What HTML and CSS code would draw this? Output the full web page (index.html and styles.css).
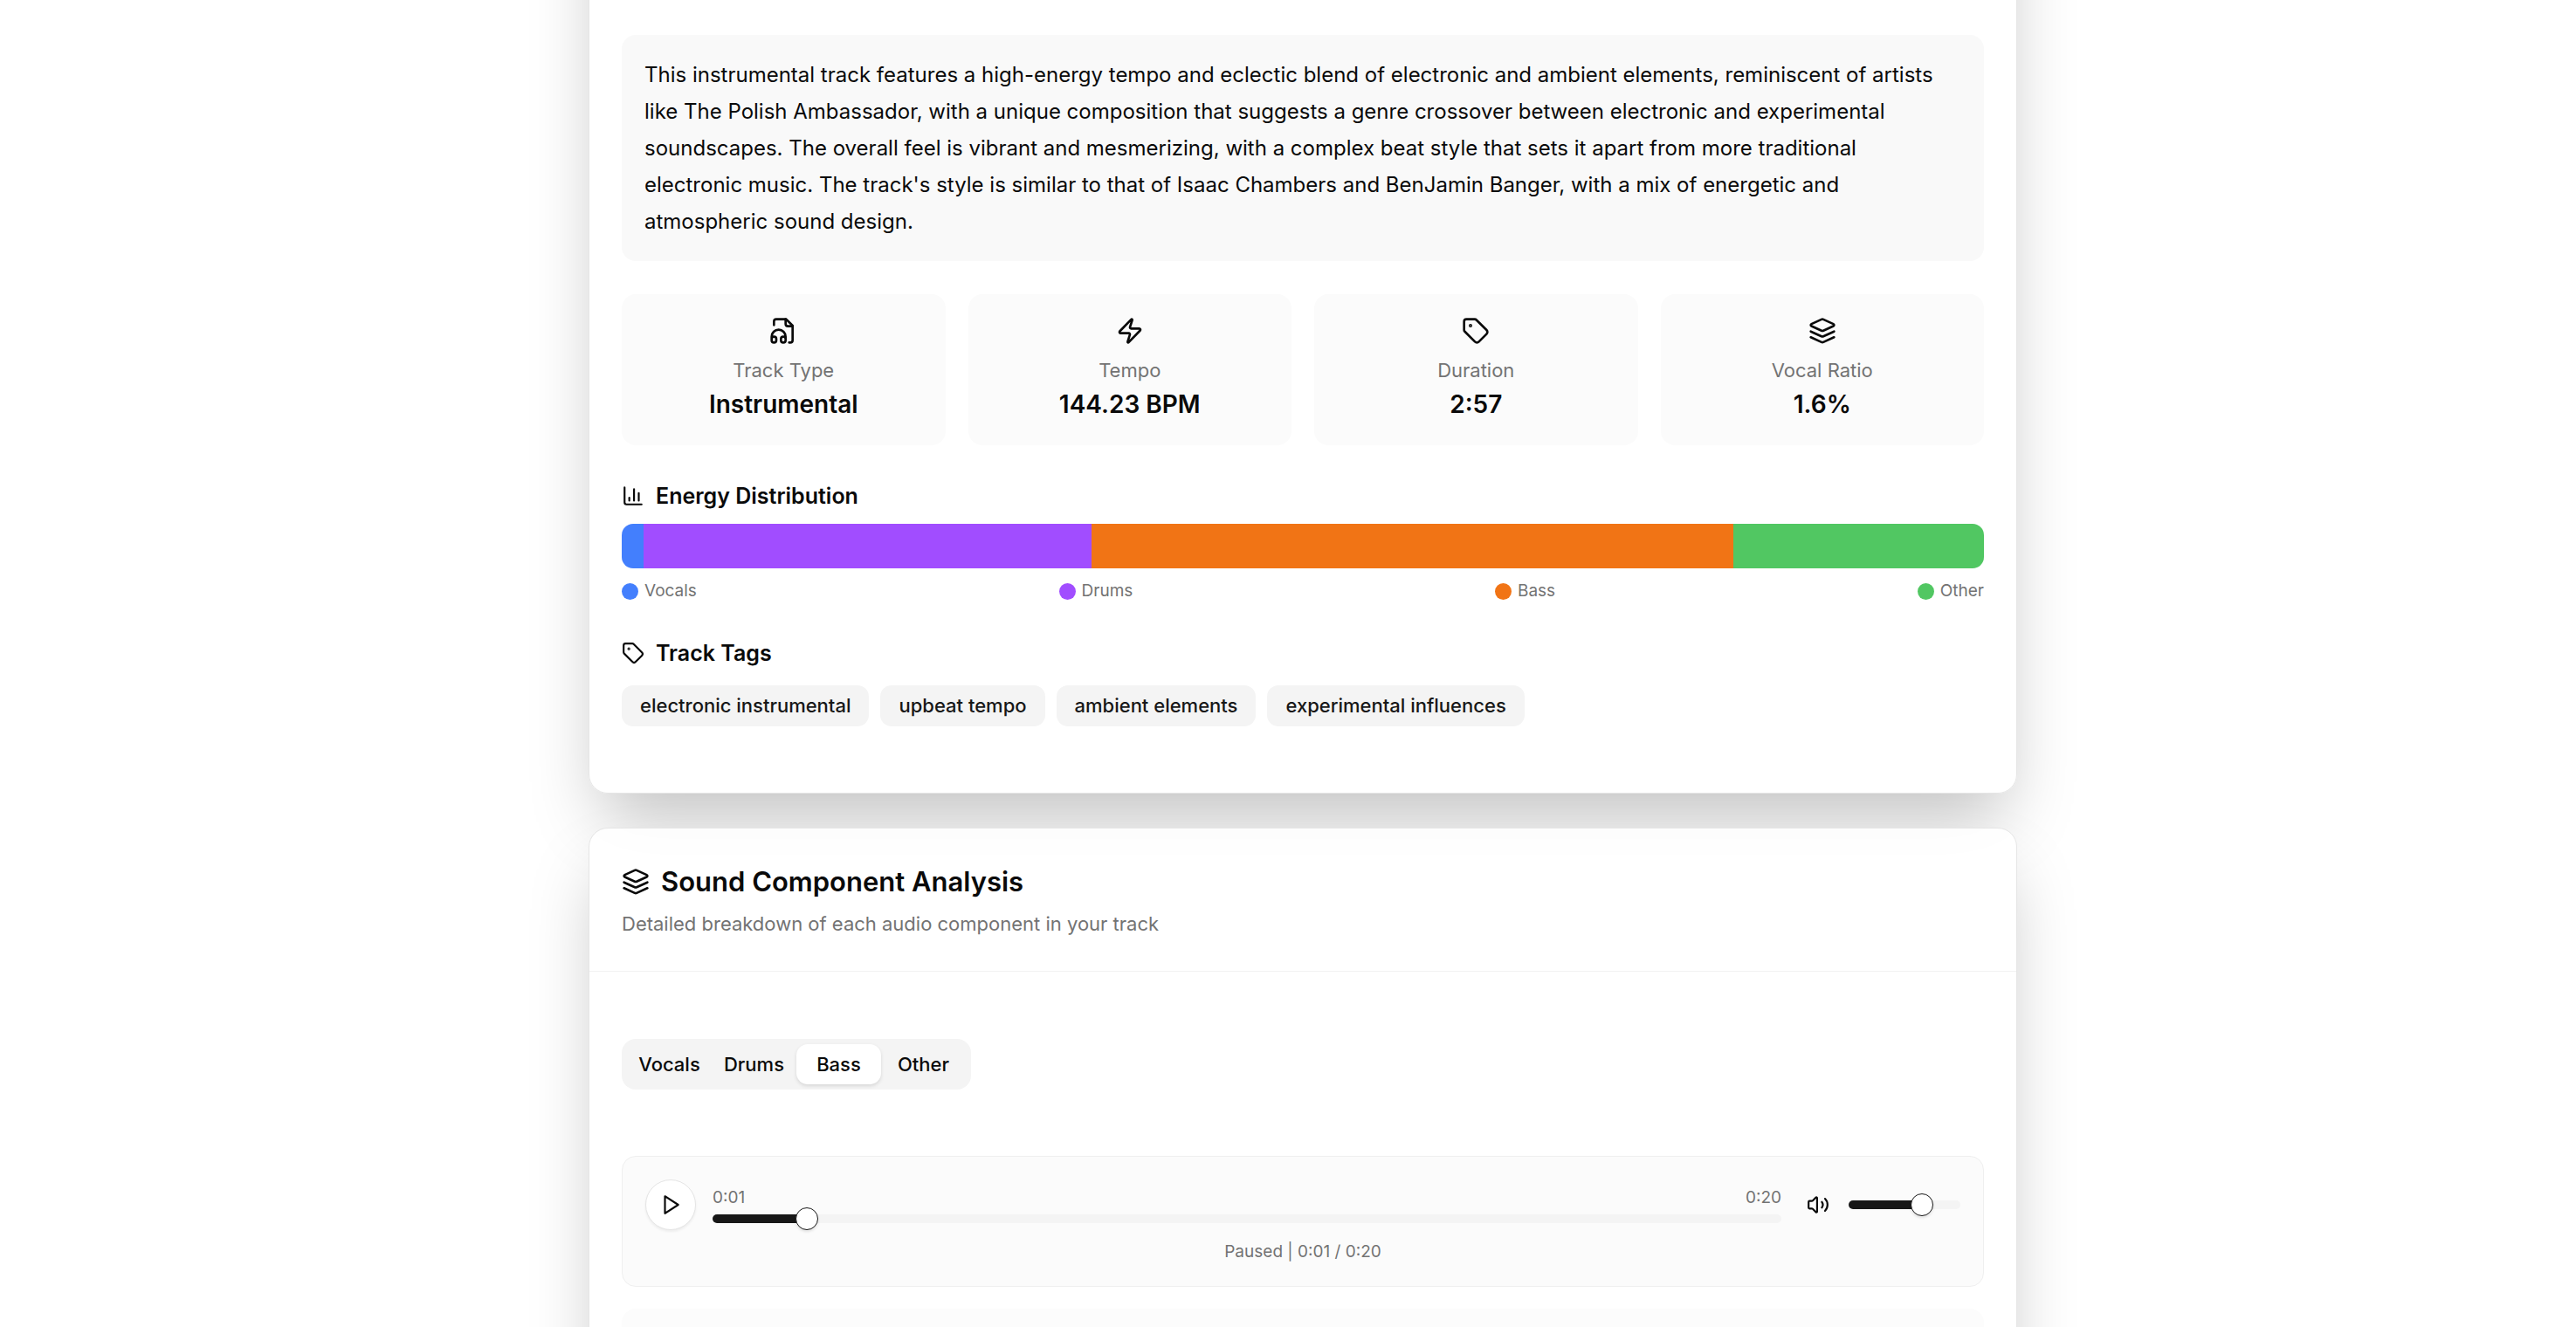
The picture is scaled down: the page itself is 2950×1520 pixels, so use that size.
FILE: index.html
```html
<!DOCTYPE html>
<html lang="en">
<head>
<meta charset="utf-8">
<meta name="viewport" content="width=device-width, initial-scale=1">
<title>Track analysis</title>
<link rel="stylesheet" href="styles.css">
</head>
<body>
<svg class="sprite" aria-hidden="true">
  <symbol id="layers" viewBox="0 0 24 24"><path d="m12.83 2.18a2 2 0 0 0-1.66 0L2.6 6.08a1 1 0 0 0 0 1.83l8.58 3.91a2 2 0 0 0 1.66 0l8.58-3.9a1 1 0 0 0 0-1.83Z"/><path d="m22 12.5-9.17 4.16a2 2 0 0 1-1.66 0L2 12.5"/><path d="m22 17.5-9.17 4.16a2 2 0 0 1-1.66 0L2 17.5"/></symbol>
  <symbol id="tag" viewBox="0 0 24 24"><path d="M12.586 2.586A2 2 0 0 0 11.172 2H4a2 2 0 0 0-2 2v7.172a2 2 0 0 0 .586 1.414l8.704 8.704a2.426 2.426 0 0 0 3.42 0l6.58-6.58a2.426 2.426 0 0 0 0-3.42z"/><circle cx="7.5" cy="7.5" r=".5" fill="currentColor"/></symbol>
</svg>
<main class="page">
  <section class="card card-overview">
    <p class="summary">This instrumental track features a high-energy tempo and eclectic blend of electronic and ambient elements, reminiscent of artists like The Polish Ambassador, with a unique composition that suggests a genre crossover between electronic and experimental soundscapes. The overall feel is vibrant and mesmerizing, with a complex beat style that sets it apart from more traditional electronic music. The track's style is similar to that of Isaac Chambers and BenJamin Banger, with a mix of energetic and atmospheric sound design.</p>

    <dl class="stats">
      <div class="stat">
        <svg class="icon icon-lg" viewBox="0 0 24 24" aria-hidden="true"><path d="M4 7V4a2 2 0 0 1 2-2h8.5L20 7.500V20a2 2 0 0 1-2 2h-1"/><path d="M14 2v4a2 2 0 0 0 2 2h4"/><path d="M2 17a6 6 0 0 1 12 0v3a2 2 0 0 1-4 0v-1a2 2 0 0 1 4 0M2 17v3a2 2 0 0 0 4 0v-1a2 2 0 0 0-4 0"/></svg>
        <dt>Track Type</dt><dd>Instrumental</dd>
      </div>
      <div class="stat">
        <svg class="icon icon-lg" viewBox="0 0 24 24" aria-hidden="true"><path d="M4 14a1 1 0 0 1-.78-1.63l9.900-10.200a.5.5 0 0 1 .86.46l-1.920 6.020A1 1 0 0 0 13 10h7a1 1 0 0 1 .78 1.630l-9.900 10.200a.5.5 0 0 1-.86-.46l1.920-6.020A1 1 0 0 0 11 14z"/></svg>
        <dt>Tempo</dt><dd>144.23 BPM</dd>
      </div>
      <div class="stat">
        <svg class="icon icon-lg" aria-hidden="true"><use href="#tag"/></svg>
        <dt>Duration</dt><dd>2:57</dd>
      </div>
      <div class="stat">
        <svg class="icon icon-lg" aria-hidden="true"><use href="#layers"/></svg>
        <dt>Vocal Ratio</dt><dd>1.6%</dd>
      </div>
    </dl>

    <section class="block">
      <h3 class="block-title"><svg class="icon" viewBox="0 0 24 24" aria-hidden="true"><path d="M3 3v16a2 2 0 0 0 2 2h16"/><path d="M18 17V9"/><path d="M13 17V5"/><path d="M8 17v-3"/></svg>Energy Distribution</h3>
      <div class="energy-bar">
        <span class="vocals" style="width:1.6%"></span>
        <span class="drums" style="width:32.9%"></span>
        <span class="bass" style="width:47.1%"></span>
        <span class="other" style="width:18.4%"></span>
      </div>
      <ul class="legend">
        <li><span class="dot vocals"></span>Vocals</li>
        <li><span class="dot drums"></span>Drums</li>
        <li><span class="dot bass"></span>Bass</li>
        <li><span class="dot other"></span>Other</li>
      </ul>
    </section>

    <section class="block">
      <h3 class="block-title"><svg class="icon" aria-hidden="true"><use href="#tag"/></svg>Track Tags</h3>
      <ul class="tags">
        <li>electronic instrumental</li>
        <li>upbeat tempo</li>
        <li>ambient elements</li>
        <li>experimental influences</li>
      </ul>
    </section>
  </section>

  <section class="card">
    <header class="card-header">
      <h2><svg class="icon icon-lg" aria-hidden="true"><use href="#layers"/></svg>Sound Component Analysis</h2>
      <p>Detailed breakdown of each audio component in your track</p>
    </header>
    <div class="card-body">
      <div class="tabs" role="tablist">
        <button type="button" role="tab" aria-selected="false">Vocals</button>
        <button type="button" role="tab" aria-selected="false">Drums</button>
        <button type="button" role="tab" aria-selected="true">Bass</button>
        <button type="button" role="tab" aria-selected="false">Other</button>
      </div>

      <div class="player">
        <div class="controls">
          <button type="button" class="play" aria-label="Play"><svg class="icon" viewBox="0 0 24 24" aria-hidden="true"><path d="M6 3l14 9-14 9z"/></svg></button>
          <div class="progress">
            <div class="times"><span>0:01</span><span>0:20</span></div>
            <input type="range" class="slider" aria-label="Position" min="0" max="1000" value="79" style="--fill:8.8%">
          </div>
          <div class="volume">
            <button type="button" class="mute" aria-label="Mute"><svg class="icon" viewBox="0 0 24 24" aria-hidden="true"><path d="M11 4.702a.705.705 0 0 0-1.203-.498L6.413 7.587A1.400 1.400 0 0 1 5.416 8H3a1 1 0 0 0-1 1v6a1 1 0 0 0 1 1h2.416a1.400 1.400 0 0 1 .997.413l3.383 3.384A.705.705 0 0 0 11 19.298z"/><path d="M16 9a5 5 0 0 1 0 6"/><path d="M19.364 18.364a9 9 0 0 0 0-12.728"/></svg></button>
            <input type="range" class="slider" aria-label="Volume" min="0" max="100" value="70" style="--fill:66%">
          </div>
        </div>
        <p class="status">Paused | 0:01 / 0:20</p>
      </div>

      <div class="details"></div>
    </div>
  </section>
</main>
</body>
</html>
```
FILE: styles.css
```css
* { box-sizing: border-box; }

body {
  margin: 0;
  height: 100vh;
  overflow: hidden;
  padding: 0 32px 0 66px;
  background: #fff;
  color: #0a0a0a;
  font-family: Inter, "Liberation Sans", sans-serif;
  font-size: 22px;
  line-height: 32px;
}

h2, h3, p, dl, dd, ul { margin: 0; padding: 0; }
ul { list-style: none; }
button { font: inherit; color: inherit; border: 0; padding: 0; background: none; cursor: pointer; }

.sprite { display: none; }

.icon {
  width: 26px;
  height: 26px;
  flex: none;
  fill: none;
  stroke: currentColor;
  stroke-width: 2;
  stroke-linecap: round;
  stroke-linejoin: round;
}
.icon-lg { width: 32px; height: 32px; }

.page {
  display: flex;
  flex-direction: column;
  gap: 39px;
  max-width: 1636px;
  margin: -200px auto 0;
}

.card {
  border: 1px solid #e5e5e5;
  border-radius: 22px;
  background: rgba(255, 255, 255, .88);
  box-shadow: 0 40px 80px -15px rgba(0, 0, 0, .25);
}
.card-overview { padding: 239px 37px 76px; }

.summary {
  padding: 25px 32px 24px 26px;
  border-radius: 16px;
  background: #f9f9f9;
  font-size: 24px;
  line-height: 42px;
}

.stats {
  display: grid;
  grid-template-columns: repeat(4, 1fr);
  gap: 26px;
  margin-top: 38px;
}
.stat {
  display: flex;
  flex-direction: column;
  align-items: center;
  padding: 26px 26px 24px;
  border-radius: 16px;
  background: #fbfbfb;
}
.stat dt { margin-top: 13px; color: #737373; }
.stat dd { font-size: 28px; font-weight: 600; line-height: 46px; }

.block { margin-top: 39px; }
.block-title {
  display: flex;
  align-items: center;
  gap: 13px;
  font-size: 25px;
  font-weight: 600;
  line-height: 38px;
}

.vocals { background: #437ffd; }
.drums { background: #a14dff; }
.bass { background: #f17415; }
.other { background: #51c762; }

.energy-bar {
  display: flex;
  height: 51px;
  margin-top: 13px;
  border-radius: 13px;
  overflow: hidden;
}
.legend {
  display: flex;
  justify-content: space-between;
  margin-top: 13px;
  color: #737373;
  font-size: 19px;
  line-height: 26px;
}
.legend li { display: flex; align-items: center; gap: 7px; }
.dot { width: 19px; height: 19px; border-radius: 50%; }

.tags { display: flex; flex-wrap: wrap; gap: 13px; margin-top: 18px; }
.tags li {
  padding: 7px 21px 8px;
  border-radius: 13px;
  background: #f4f4f4;
  color: #171717;
  font-weight: 500;
}

.card-header { padding: 38px 37px; border-bottom: 1px solid #f2f2f2; }
.card-header h2 {
  display: flex;
  align-items: center;
  gap: 13px;
  font-size: 31px;
  font-weight: 600;
  line-height: 46px;
}
.card-header p { margin-top: 9px; color: #737373; }

.card-body { padding: 77px 37px; }

.tabs {
  display: inline-grid;
  grid-template-columns: repeat(4, 97px);
  padding: 6px;
  border-radius: 16px;
  background: #f4f4f4;
  vertical-align: top;
}
.tabs button { height: 46px; border-radius: 13px; font-weight: 500; }
.tabs button[aria-selected="true"] { background: #fff; box-shadow: 0 2px 4px rgba(0, 0, 0, .12); }

.player {
  margin-top: 76px;
  padding: 26px;
  border: 1px solid #efefef;
  border-radius: 16px;
  background: #fbfbfb;
  color: #737373;
  font-size: 19px;
  line-height: 26px;
}
.controls { display: flex; align-items: center; gap: 19px; color: #0a0a0a; }
.play {
  display: grid;
  place-items: center;
  width: 58px;
  height: 58px;
  border: 1px solid #e5e5e5;
  border-radius: 50%;
  background: #fff;
  box-shadow: 0 2px 3px rgba(0, 0, 0, .06);
}
.progress { flex: 1; display: flex; flex-direction: column; gap: 6px; }
.times { display: flex; justify-content: space-between; color: #737373; }
.volume { display: flex; align-items: center; gap: 13px; }
.volume .slider { width: 128px; }
.mute { display: grid; place-items: center; width: 45px; height: 51px; }

.slider {
  appearance: none;
  display: block;
  width: 100%;
  height: 10px;
  margin: 0;
  border-radius: 5px;
  background: linear-gradient(to right, #171717 var(--fill), #f4f4f4 var(--fill));
}
.slider::-webkit-slider-thumb {
  appearance: none;
  width: 26px;
  height: 26px;
  border: 1px solid #171717;
  border-radius: 50%;
  background: #fff;
  box-shadow: 0 2px 3px rgba(0, 0, 0, .1);
}
.status { margin-top: 12px; text-align: center; }

.details { height: 240px; margin-top: 25px; border-radius: 16px; background: #fcfcfc; }
```
